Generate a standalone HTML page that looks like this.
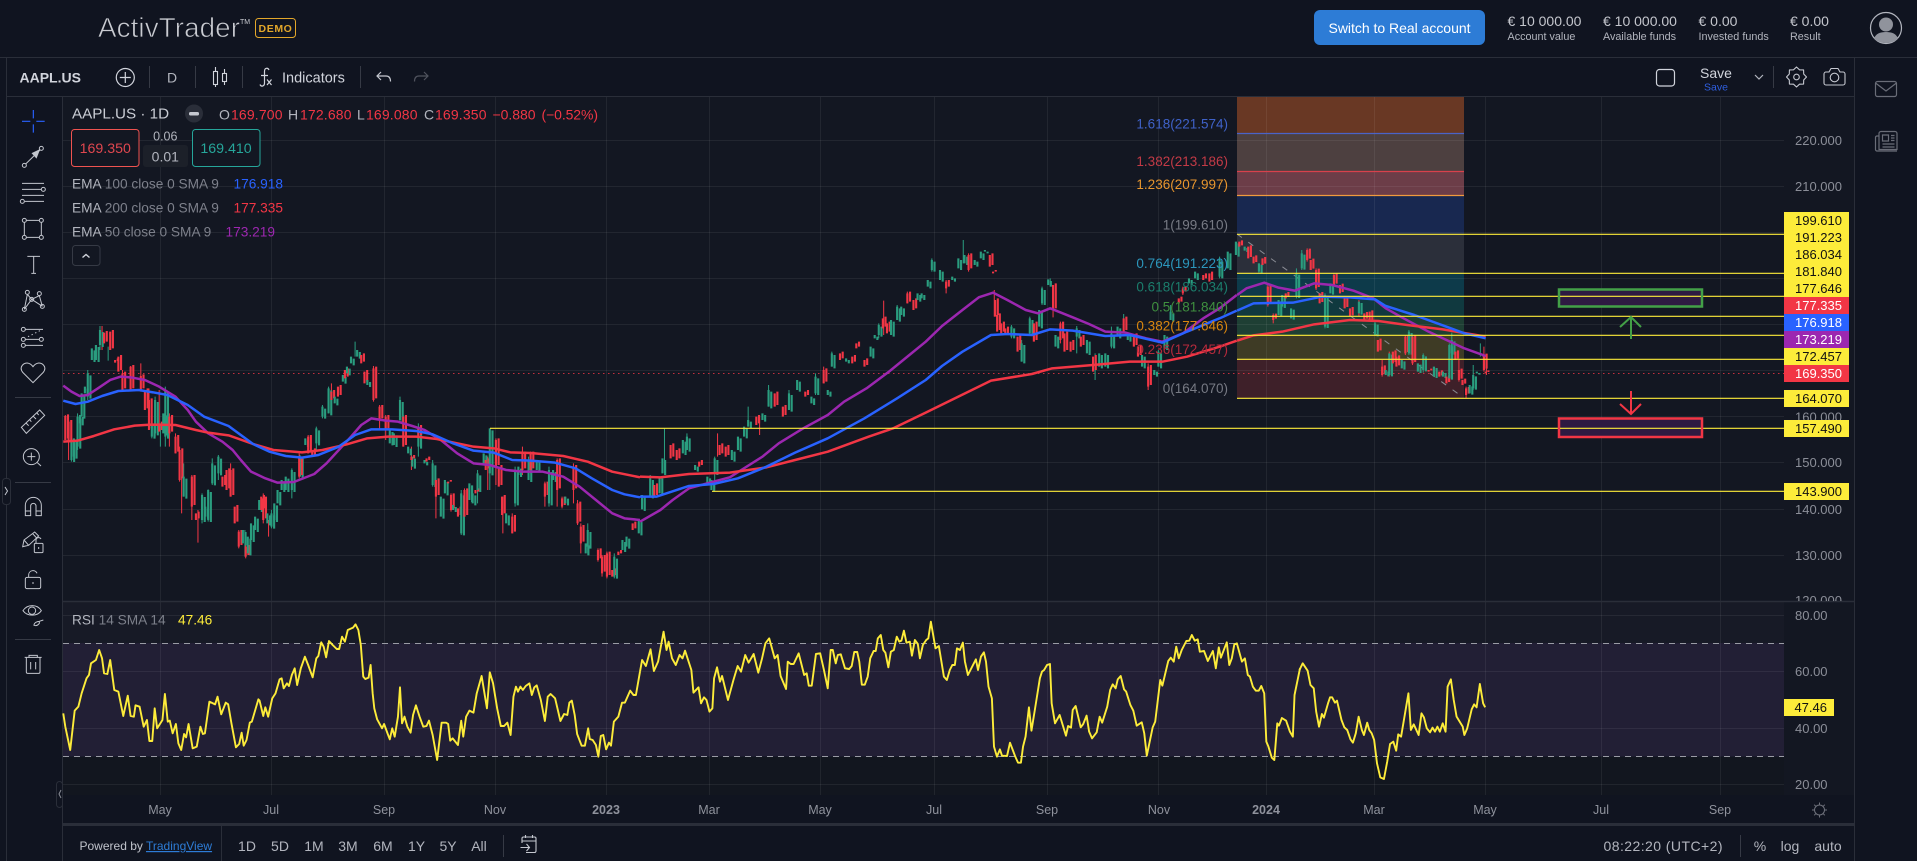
<!DOCTYPE html>
<html lang="en"><head><meta charset="utf-8"><title>ActivTrader AAPL.US</title>
<style>
html,body{margin:0;padding:0;background:#101420;overflow:hidden}
svg{display:block;font-family:"Liberation Sans",sans-serif}
.g{fill:#b2b5be}.d{fill:#7d808b}.r{fill:#f23645}
.ax{font-size:13px;fill:#8b8e98}
.t{font-size:12.5px;fill:#8f929c;text-anchor:middle}
.k{font-size:13px;fill:#111;text-anchor:end}
.w{font-size:13px;fill:#fff;text-anchor:end}
.i{fill:none;stroke:#c3c6ce;stroke-width:3}
.f{font-size:13.5px;text-anchor:end}
.rg{font-size:14px;fill:#b2b5be;text-anchor:middle}
.v{stroke:#fff;stroke-opacity:.065;stroke-width:1;fill:none}
.ema{fill:none;stroke-width:2.5;vector-effect:non-scaling-stroke;stroke-linejoin:round}
.rsi{fill:none;stroke:#fdec3a;stroke-width:1.9;vector-effect:non-scaling-stroke;stroke-linejoin:round}
</style></head><body>
<svg width="1917" height="861" viewBox="0 0 1917 861" xmlns="http://www.w3.org/2000/svg">
<rect width="1917" height="861" fill="#101420"/>
<!-- chart bg -->
<rect x="63" y="97" width="1791" height="727" fill="#131722"/>
<rect x="63" y="602" width="1791" height="41" fill="#171a26"/>
<rect x="63" y="757" width="1721" height="38" fill="#12161f"/>
<rect x="1784" y="602" width="70" height="193" fill="#131722"/>
<rect x="63" y="795" width="1791" height="29" fill="#101420"/>
<rect x="63" y="643" width="1721" height="113.500" fill="#221f35"/>
<!-- fib bands -->
<rect x="1237" y="97" width="227" height="36.500" fill="#693824"/>
<rect x="1237" y="133.500" width="227" height="38" fill="#4d4040"/>
<rect x="1237" y="171.500" width="227" height="24" fill="#6c3d48"/>
<rect x="1237" y="195.500" width="227" height="39" fill="#182850"/>
<rect x="1237" y="234.300" width="227" height="39" fill="#2b2f3a"/>
<rect x="1237" y="273.300" width="227" height="23" fill="#0d3a4a"/>
<rect x="1237" y="296.300" width="227" height="20" fill="#10393f"/>
<rect x="1237" y="316.300" width="227" height="19" fill="#1e3f34"/>
<rect x="1237" y="335.300" width="227" height="24" fill="#3e3b25"/>
<rect x="1237" y="359.300" width="227" height="39" fill="#3e2029"/>
<!-- grid -->
<path class="v" d="M63 140.500H1784M63 186.500H1784M63 232.500H1784M63 278.500H1784M63 324.500H1784M63 370.500H1784M63 416.500H1784M63 462.500H1784M63 509.500H1784M63 555.500H1784M63 615.500H1784M63 671.500H1784M63 728.500H1784M63 784.500H1784"/>
<path class="v" d="M160.500 97V795M271.500 97V795M384.500 97V795M495.500 97V795M606.500 97V795M709.500 97V795M820.500 97V795M934.500 97V795M1047.500 97V795M1158.500 97V795M1266.500 97V795M1374.500 97V795M1485.500 97V795M1601.500 97V795M1720.500 97V795"/>
<!-- structure lines -->
<path d="M0 57.500H1917M6.500 57.500V861M6.500 96.500H1854.500M62.500 96.500V861M1854.500 57.500V861" stroke="#2a2e39" fill="none"/>
<path d="M63 601.500H1854" stroke="#2a2e39" stroke-width="1.500"/>
<path d="M63 824.500H1854" stroke="#2a2e39" stroke-width="3"/>
<path d="M221.500 825V861" stroke="#2a2e39"/>
<path d="M149.500 66V88M195.500 66V88M242.500 66V88M360.500 66V88M1773.500 66V88" stroke="#363a45"/>
<path d="M503.500 835V857M1740.500 835V857" stroke="#363a45"/>
<!-- rsi dashed -->
<path d="M63 643.500H1784M63 756.500H1784" stroke="#9a9ca5" stroke-dasharray="6 5"/>
<!-- dotted price -->
<path d="M63 373.500H1784" stroke="#f23645" stroke-opacity=".8" stroke-dasharray="1.500 3.500"/>
<!-- trend dashed -->
<path d="M1237 234L1464 398" stroke="#8a8c94" stroke-dasharray="6 8"/>
<!-- candles zoom3 -->
<g transform="matrix(.40816 0 0 .33333 0 290)" fill="none">
<path stroke="#2a9d7f" stroke-width="2.500" d="M175 445V515M190 370V480M215 240V330M245 108V180M265 170V212M405 290V470M393 400V470M372 390V445M380 320V440M450 520V620M495 610V700M510 598V695M520 505V585M535 495V570M600 720V800M665 660V715M715 535V625M735 495V560M775 410V480M790 345V385M805 290V370M870 155V200M980 320V400M1025 400V500M1060 510V590M1130 600V735M1170 540V640M1200 415V600M1262 530V650M1295 500V570M1345 530V650M1440 700V790M1505 790V865"/>
<path stroke="#f23645" stroke-width="2.500" d="M160 375V450M168 390V510M250 108V180M300 240V305M320 228V300M345 220V305M365 295V420M390 300V420M415 370V470M430 430V490M440 470V575M445 560V670M470 555V690M485 660V758M565 520V620M585 720V775M602 760V805M645 610V700M658 690V740M733 490V565M755 435V490M812 280V330M915 228V335M930 345V420M945 375V450M988 375V470M1008 470V540M1068 565V685M1105 610V665M1138 595V680M1195 500V600M1215 445V585M1232 620V730M1255 670V730M1280 470V555M1300 485V550M1335 575V650M1365 505V650M1377 620V655M1405 520V640M1415 630V705M1423 700V790M1465 775V815M1475 795V860M1487 785V865"/>
<use href="#g3" transform="translate(6.600 6)"/><use href="#r3" transform="translate(6.600 -5)"/>
<path id="g3" stroke="#2a9d7f" stroke-width="5.200" d="M175 450V510M181 445V500M190 380V470M196 375V400M200 310V380M208 290V310M215 250V320M225 175V210M235 165V210M245 120V165M372 400V440M380 330V430M405 300V440M400 370V430M450 560V620M495 615V690M503 650V680M510 600V690M520 520V580M535 500V550M595 720V760M607 740V790M615 700V750M625 680V720M635 630V660M655 670V700M665 670V710M672 640V690M680 600V640M690 570V600M700 560V600M715 540V600M735 500V560M748 445V465M775 415V460M790 350V380M805 295V370M820 320V340M840 255V275M850 230V250M860 200V220M875 180V200M900 270V285M955 420V460M965 430V465M980 330V390M1000 470V490M1010 500V530M1025 410V470M1040 510V520M1060 520V585M1080 620V680M1090 570V610M1110 645V660M1130 610V730M1150 580V630M1158 610V640M1170 550V600M1185 490V520M1200 415V550M1240 670V700M1262 540V640M1270 530V555M1295 510V570M1315 510V540M1345 540V640M1355 540V570M1385 620V640M1440 720V770M1435 760V790M1505 800V860M1525 750V780M1535 740V770M1565 690V730"/>
<path id="r3" stroke="#f23645" stroke-width="5.200" d="M160 378V450M168 395V455M255 128V160M270 125V180M282 210V218M290 200V245M300 250V300M320 230V300M345 258V300M355 300V360M365 330V420M390 400V425M415 380V430M430 440V490M440 480V570M470 560V650M480 670V690M545 560V590M555 540V600M565 540V620M575 650V700M585 725V770M602 770V800M640 620V660M645 625V690M733 505V560M755 440V490M765 480V500M812 305V330M828 290V320M845 240V265M885 195V220M893 245V280M915 235V330M930 350V390M945 380V420M988 380V470M1008 500V510M1025 410V440M1045 505V515M1068 570V620M1098 575V580M1105 615V660M1122 655V680M1138 600V680M1165 600V610M1190 510V540M1215 450V530M1222 530V590M1230 620V675M1255 680V730M1280 490V540M1300 490V540M1335 580V620M1365 510V600M1377 625V650M1405 530V600M1415 640V700M1423 710V760M1465 780V810M1475 800V850M1487 790V860M1500 840V860M1515 785V795M1550 700V720"/>
</g>
<!-- candles zoom7 -->
<g transform="matrix(.40816 0 0 .33333 640 220)" fill="none">
<path stroke="#2a9d7f" stroke-width="2.500" d="M25 765V830M60 625V760M115 640V690M183 710V810M265 560V620M315 495V560M365 510V570M430 460V525M470 395V440M585 310V355M630 255V300M715 115V155M792 60V130M910 315V355M935 360V425M955 290V345M985 200V255M1005 175V200M1070 318V400M1115 400V480M1155 320V385M1185 282V335M1270 390V440M1300 255V300M1420 110V175"/>
<path stroke="#f23645" stroke-width="2.500" d="M190 640V710M293 590V645M450 440V490M597 242V345M655 215V250M750 180V220M805 100V155M868 210V290M1012 195V292M1030 305V370M1245 430V510M1330 200V225"/>
<use href="#g7" transform="translate(6.600 5)"/><use href="#r7" transform="translate(6.600 -5)"/>
<path id="g7" stroke="#2a9d7f" stroke-width="5.200" d="M5 825V868M25 775V830M48 770V820M55 715V760M105 660V700M115 650V690M135 735V750M165 770V790M175 780V810M183 715V760M225 690V720M240 650V690M255 620V650M265 600V620M300 580V600M315 510V560M365 520V570M385 480V510M420 530V550M430 470V520M460 510V525M470 400V440M505 415V425M565 380V410M575 345V355M585 315V345M615 300V345M630 260V300M640 260V285M680 220V240M690 220V235M705 180V200M715 120V150M735 150V180M765 170V180M780 115V145M795 105V130M820 120V135M835 95V115M845 90V95M910 320V350M935 370V425M955 295V340M978 270V320M985 205V250M1000 178V195M1018 345V380M1070 325V350M1095 360V400M1125 400V440M1140 400V440M1155 340V380M1170 320V350M1195 340V360M1230 405V440M1260 450V465M1270 395V440M1285 345V385M1300 275V300M1345 175V190M1360 155V175M1420 120V170M1440 95V145M1460 65V105"/>
<path id="r7" stroke="#f23645" stroke-width="5.200" d="M35 795V830M75 675V715M90 690V720M145 725V740M195 675V705M210 680V710M285 590V615M330 520V560M350 560V590M405 515V530M450 450V490M490 400V420M520 410V430M530 370V385M550 420V440M595 295V325M605 310V340M655 220V250M670 240V270M750 185V205M805 105V150M857 105V140M865 155V160M870 240V290M875 285V335M885 310V340M895 325V345M925 350V395M965 310V365M1012 195V270M1030 310V360M1040 340V395M1055 365V395M1080 350V380M1110 410V455M1185 295V335M1210 345V380M1220 380V410M1245 440V500M1320 235V250M1330 205V220M1380 165V180M1395 160V185"/>
</g>
<!-- candles zoom5 -->
<g transform="matrix(.35714 0 0 .33333 1100 220)" fill="none">
<path stroke="#2a9d7f" stroke-width="2.800" d="M445 130V160M550 145V235M565 90V150M630 220V325M770 305V348M865 330V405M905 400V458M978 370V480M985 338V400M1065 370V410M1045 435V510"/>
<path stroke="#f23645" stroke-width="2.800" d="M470 195V260M485 280V310M580 85V125M605 145V210M655 160V195M725 240V290M790 420V470M810 395V470M855 345V405M875 345V435M1005 420V485M1025 500V535M1075 380V455M1082 440V465"/>
<use href="#g5" transform="translate(7.500 4)"/><use href="#r5" transform="translate(7.500 -4)"/>
<path id="g5" stroke="#2a9d7f" stroke-width="6" d="M405 80V92M445 130V155M500 240V285M510 225V260M535 265V295M550 160V230M565 100V145M630 225V320M645 190V220M725 245V280M770 310V345M800 450V465M810 400V465M845 420V445M865 335V400M890 430V455M905 405V450M935 440V470M960 455V470M978 375V475M985 360V400M1035 495V520M1045 465V505M1055 455V460M1065 400V405"/>
<path id="r5" stroke="#f23645" stroke-width="6" d="M390 65V80M415 80V115M430 110V130M455 115V135M470 200V255M485 285V300M520 220V235M580 90V120M590 120V150M605 150V205M615 220V250M655 165V195M672 195V220M685 235V265M700 265V290M740 280V300M755 275V305M778 360V395M790 440V465M820 395V430M830 410V440M855 350V400M875 350V430M920 450V455M950 455V470M970 470V490M995 395V420M1005 450V480M1015 480V495M1025 505V525M1075 405V450M1080 455V460"/>
</g>
<!-- ema zoom3 -->
<g transform="matrix(.40816 0 0 .33333 0 290)">
<polyline class="ema" stroke="#9c27b0" points="155,287 175,305 195,318 215,315 240,295 270,270 295,260 320,262 355,270 390,290 430,320 460,360 480,395 510,430 545,455 570,480 590,510 615,545 650,565 680,578 720,576 770,552 800,520 830,480 860,440 885,405 910,385 945,392 975,395 1010,408 1040,420 1080,450 1120,490 1160,520 1200,525 1240,540 1280,545 1330,545 1380,560 1420,590 1460,630 1500,670 1530,685 1568,690"/>
<polyline class="ema" stroke="#f23645" points="155,455 190,452 230,438 280,418 330,407 370,404 430,405 480,420 510,428 560,436 620,462 670,480 740,487 790,480 850,463 900,445 950,440 1020,440 1070,447 1120,460 1160,470 1210,475 1250,487 1300,489 1380,498 1440,515 1500,545 1568,562"/>
<polyline class="ema" stroke="#2962ff" points="155,332 185,342 215,335 250,318 290,303 340,300 375,307 410,315 460,345 500,380 560,408 590,435 620,462 660,485 700,498 740,503 780,495 830,470 870,435 910,418 960,418 1020,423 1060,433 1110,460 1160,482 1210,488 1255,510 1300,512 1360,518 1410,535 1450,565 1500,600 1530,613 1568,622"/>
</g>
<!-- ema zoom7 -->
<g transform="matrix(.40816 0 0 .33333 640 220)">
<polyline class="ema" stroke="#9c27b0" points="0,905 50,870 80,840 120,805 165,790 220,772 300,710 340,670 400,625 460,585 500,545 555,505 610,455 660,405 700,365 740,318 790,270 830,232 865,218 900,240 945,270 975,280 1005,265 1060,292 1100,312 1140,335 1190,338 1240,355 1280,365 1330,340 1380,295 1420,265 1462,225"/>
<polyline class="ema" stroke="#f23645" points="0,770 50,772 120,762 220,758 310,742 380,720 460,695 560,650 620,625 700,578 780,530 860,482 960,462 1010,445 1110,435 1200,425 1280,425 1340,410 1420,380 1462,362"/>
<polyline class="ema" stroke="#2962ff" points="0,830 40,830 120,798 180,792 240,775 310,740 380,698 460,655 550,595 630,535 700,480 740,438 790,395 860,345 900,342 960,345 1005,328 1060,332 1140,348 1200,345 1280,368 1340,335 1420,295 1462,272"/>
</g>
<!-- ema zoom5 -->
<g transform="matrix(.35714 0 0 .33333 1100 220)">
<polyline class="ema" stroke="#9c27b0" points="384,225 410,205 460,188 500,203 545,212 600,190 650,195 710,212 765,235 800,265 850,295 920,335 980,365 1020,385 1080,408"/>
<polyline class="ema" stroke="#f23645" points="384,362 430,346 510,335 600,313 700,300 780,303 860,315 960,328 1080,350"/>
<polyline class="ema" stroke="#2962ff" points="384,272 430,250 540,248 620,230 700,232 770,238 800,258 880,285 970,320 1020,340 1080,355"/>
</g>
<!-- fib lines -->
<path d="M1237 133.500H1464" stroke="#4a63c8" stroke-width="1.300"/>
<path d="M1237 171.500H1464" stroke="#d8414c" stroke-width="1.300"/>
<path d="M1237 195.500H1464" stroke="#f09a3e" stroke-width="1.300"/>
<path d="M1237 234.300H1784M1237 273.300H1784M1240 296.300H1784M1237 316.300H1784M1237 335.300H1784M1237 359.300H1784M1237 398.300H1784M490 428.300H1784M712 491.300H1784" stroke="#fdec3a" stroke-width="1.200"/>
<!-- fib labels -->
<g class="f">
<text class="f" x="1228" y="128.500" fill="#3f62c9">1.618(221.574)</text>
<text class="f" x="1228" y="166" fill="#c33a46">1.382(213.186)</text>
<text class="f" x="1228" y="189" fill="#e8962e">1.236(207.997)</text>
<text class="f" x="1228" y="229.500" fill="#777a84">1(199.610)</text>
<text class="f" x="1228" y="268" fill="#2c97bd">0.764(191.223)</text>
<text class="f" x="1228" y="291.500" fill="#1b7d6c">0.618(186.034)</text>
<text class="f" x="1228" y="311.500" fill="#3f8f3f">0.5(181.840)</text>
<text class="f" x="1228" y="330.500" fill="#d8860f">0.382(177.646)</text>
<text class="f" x="1228" y="354" fill="#b42a3c">0.236(172.457)</text>
<text class="f" x="1228" y="393" fill="#777a84">0(164.070)</text>
</g>
<!-- boxes & arrows -->
<rect x="1559" y="289.500" width="143" height="17" fill="#2e1a42" stroke="#43a047" stroke-width="2.500"/>
<path d="M1560 296.300H1701" stroke="#fdec3a" stroke-width="1.200"/>
<rect x="1559" y="418.500" width="143" height="18.500" fill="#2e1a42" stroke="#f23645" stroke-width="2.500"/>
<path d="M1560 428.300H1701" stroke="#fdec3a" stroke-width="1.200"/>
<path d="M1631 339V317M1620 327L1631 317L1641 327" fill="none" stroke="#43a047" stroke-width="2"/>
<path d="M1631 391V414M1620 404L1631 414L1641 404" fill="none" stroke="#f23645" stroke-width="2"/>
<!-- RSI -->
<g transform="matrix(.40816 0 0 .33333 0 580)">
<polyline class="rsi" points="155,400 160,440 172,510 183,392 192,380 200,340 212,295 218,285 223,250 235,240 243,210 250,235 255,280 263,282 270,240 280,330 290,335 302,408 313,347 320,408 328,410 332,376 342,380 352,440 360,420 366,483 373,483 379,385 385,445 398,420 404,342 411,425 416,422 423,460 431,432 437,490 444,510 451,462 456,472 462,432 472,505 482,500 491,440 497,462 502,460 513,365 527,373 533,350 542,403 553,368 559,373 567,430 578,502 586,492 592,458 597,497 604,480 612,428 617,425 633,358 636,362 645,408 650,382 657,410 667,355 675,340 685,298 690,295 695,325 703,310 708,318 715,285 722,265 728,315 737,265 747,230 755,255 766,292 775,235 780,228 787,187 793,200 799,232 806,183 815,195 825,207 831,207 838,170 845,185 852,150 865,143 871,133 878,150 884,195 890,290 895,297 903,293 908,255 913,340 917,385 924,418 936,445 941,432 950,462 955,478 961,445 967,470 975,410 980,322 985,430 991,410 998,440 1006,458 1012,405 1019,376 1028,410 1037,440 1045,438 1051,422 1060,465 1071,540 1082,428 1093,428 1098,432 1103,482 1109,475 1122,495 1130,422 1135,470 1142,410 1150,392 1160,398 1168,340 1180,288 1193,385 1200,277 1208,310 1218,385 1227,438 1235,438 1243,428 1251,465 1258,350 1264,320 1269,335 1275,320 1281,330 1288,318 1297,310 1303,345 1309,322 1315,316 1325,360 1335,423 1342,350 1349,342 1360,355 1373,423 1382,402 1390,405 1395,368 1401,362 1408,405 1414,462 1425,497 1433,497 1441,445 1445,477 1452,480 1460,495 1466,530 1472,468 1478,465 1485,508 1492,488 1497,497 1504,425 1515,410 1524,368 1531,368 1544,332 1552,345 1558,345 1568,275"/>
</g>
<g transform="matrix(.42092 0 0 .33333 640 590)">
<polyline class="rsi" points="0,245 5,210 14,228 25,178 33,243 43,215 56,125 63,180 68,155 76,205 85,225 94,195 101,205 107,182 122,240 127,308 139,292 145,340 152,322 158,330 165,365 172,355 176,265 183,232 190,275 195,258 209,330 222,270 232,228 240,245 250,195 258,218 270,192 281,248 290,205 298,160 307,145 320,205 327,195 334,258 347,297 351,215 358,222 365,222 377,190 390,255 396,250 401,287 408,287 418,192 428,190 437,240 446,295 453,180 458,180 465,220 470,195 477,193 487,235 497,237 503,228 509,186 516,186 521,215 527,284 534,284 541,260 547,205 555,183 560,183 565,145 572,135 578,180 583,188 590,232 596,185 603,180 610,140 616,155 621,152 627,122 633,158 641,155 646,197 653,150 660,162 665,205 672,165 680,150 685,145 691,95 702,175 710,168 722,260 729,270 736,240 742,225 748,225 753,175 760,180 767,158 772,215 779,255 798,208 803,240 810,200 817,187 822,215 828,290 836,325 841,470 848,500 855,478 860,497 872,498 879,458 891,498 898,518 905,518 910,470 916,440 924,352 930,422 938,360 950,265 955,245 960,240 967,225 974,222 978,340 986,400 997,375 1012,437 1017,408 1024,413 1028,360 1035,348 1047,412 1053,402 1061,377 1067,425 1074,445 1085,427 1092,380 1098,398 1110,350 1117,300 1123,283 1130,295 1135,268 1142,258 1150,298 1155,305 1165,345 1172,362 1180,407 1192,397 1198,430 1204,497 1218,412 1224,395 1236,270 1241,287 1255,213 1261,203 1268,215 1274,170 1280,205 1287,180 1298,153 1305,152 1311,135 1318,152 1325,148 1330,185 1340,183 1349,213 1361,183 1368,235 1375,172 1380,203 1394,157 1400,225 1406,205 1412,163 1418,160 1430,215 1437,205 1444,255 1449,260 1456,290 1463,302 1470,302 1476,288 1483,310 1488,455 1493,470 1501,503 1507,510 1514,400 1518,407 1525,384 1535,392 1544,425 1551,440 1555,315 1568,235"/>
</g>
<g transform="matrix(.40816 0 0 .33333 1277 580)">
<polyline class="rsi" points="55,270 63,250 75,272 82,315 90,325 96,395 103,440 110,402 115,413 125,370 130,352 135,352 142,368 147,362 158,420 165,442 172,450 180,478 186,488 193,460 200,410 208,450 213,465 221,428 226,450 232,460 238,480 245,550 253,592 262,597 270,545 277,492 285,485 292,512 297,463 304,470 322,340 328,450 335,433 347,465 354,400 360,412 367,445 375,457 381,443 387,455 393,440 399,455 406,430 413,455 418,320 426,298 433,360 440,410 455,440 459,465 466,445 477,388 483,373 489,382 497,312 505,370 510,382"/>
</g>
<!-- price axis -->
<g class="ax">
<text x="1795" y="145">220.000</text><text x="1795" y="191">210.000</text>
<text x="1795" y="421.500">160.000</text><text x="1795" y="467">150.000</text><text x="1795" y="514">140.000</text><text x="1795" y="560">130.000</text>
<text x="1795" y="620">80.00</text><text x="1795" y="676">60.00</text><text x="1795" y="733">40.00</text><text x="1795" y="789">20.00</text>
</g>
<svg x="1784" y="590" width="65" height="11"><text class="ax" x="11" y="15">120.000</text></svg>
<rect x="1784" y="212" width="65" height="85" fill="#fdec3a"/>
<rect x="1784" y="297" width="65" height="17" fill="#f23645"/>
<rect x="1784" y="314" width="65" height="17" fill="#2962ff"/>
<rect x="1784" y="331" width="65" height="17" fill="#9c27b0"/>
<rect x="1784" y="348" width="65" height="17" fill="#fdec3a"/>
<rect x="1784" y="365" width="65" height="17" fill="#f23645"/>
<rect x="1784" y="390" width="65" height="17" fill="#fdec3a"/>
<rect x="1784" y="420" width="65" height="17" fill="#fdec3a"/>
<rect x="1784" y="483" width="65" height="17" fill="#fdec3a"/>
<rect x="1784" y="699" width="50" height="17" fill="#fdec3a"/>
<text class="k" x="1842" y="225">199.610</text><text class="k" x="1842" y="242">191.223</text><text class="k" x="1842" y="259">186.034</text><text class="k" x="1842" y="276">181.840</text><text class="k" x="1842" y="293">177.646</text>
<text class="w" x="1842" y="310">177.335</text><text class="w" x="1842" y="327">176.918</text><text class="w" x="1842" y="344">173.219</text>
<text class="k" x="1842" y="361">172.457</text><text class="w" x="1842" y="378">169.350</text>
<text class="k" x="1842" y="403">164.070</text><text class="k" x="1842" y="433">157.490</text><text class="k" x="1842" y="496">143.900</text>
<text class="k" x="1827" y="712">47.46</text>
<!-- time axis -->
<g class="t">
<text class="t" x="160" y="814">May</text><text class="t" x="271" y="814">Jul</text><text class="t" x="384" y="814">Sep</text><text class="t" x="495" y="814">Nov</text>
<text class="t" x="606" y="814" font-weight="700">2023</text><text class="t" x="709" y="814">Mar</text><text class="t" x="820" y="814">May</text><text class="t" x="934" y="814">Jul</text><text class="t" x="1047" y="814">Sep</text><text class="t" x="1159" y="814">Nov</text>
<text class="t" x="1266" y="814" font-weight="700">2024</text><text class="t" x="1374" y="814">Mar</text><text class="t" x="1485" y="814">May</text><text class="t" x="1601" y="814">Jul</text><text class="t" x="1720" y="814">Sep</text>
</g>
<g fill="none" stroke="#6f727c"><circle cx="1819.500" cy="810" r="5"/><path d="M1819.500 802.500v2M1819.500 815.500v2M1812 810h2M1825 810h2M1814.200 804.700l1.400 1.400M1823.400 813.900l1.400 1.400M1824.800 804.700l-1.400 1.400M1815.600 813.900l-1.400 1.400"/></g>
<!-- header -->
<text x="98" y="37" font-size="27.800" fill="#c9cbd1" stroke="#101420" stroke-width=".7" textLength="142" lengthAdjust="spacing">ActivTrader</text>
<text x="240" y="24" font-size="7" fill="#c9cbd1">TM</text>
<rect x="255.500" y="18.500" width="40" height="19" rx="3" fill="none" stroke="#e3a72a"/>
<text x="275.500" y="32" font-size="10.500" font-weight="700" fill="#e3a72a" text-anchor="middle" letter-spacing=".6">DEMO</text>
<rect x="1314" y="10" width="171" height="35" rx="6" fill="#2d7cd6"/>
<text x="1399.500" y="33" font-size="14" fill="#fff" text-anchor="middle" textLength="142" lengthAdjust="spacing">Switch to Real account</text>
<g font-size="14" fill="#c4c6cd">
<text x="1507.500" y="26">€ 10 000.00</text><text x="1603" y="26">€ 10 000.00</text><text x="1698.500" y="26">€ 0.00</text><text x="1790" y="26">€ 0.00</text>
</g>
<g font-size="10.800" fill="#b2b5be">
<text x="1507.500" y="40">Account value</text><text x="1603" y="40">Available funds</text><text x="1698.500" y="40">Invested funds</text><text x="1790" y="40">Result</text>
</g>
<circle cx="1886" cy="28" r="15.500" fill="none" stroke="#b2b5be" stroke-width="1.200"/>
<circle cx="1886" cy="24.500" r="7" fill="#90939c"/>
<path d="M1874 38.500c2-5 6-6.500 12-6.500s10 1.500 12 6.500c-3 3-7 4.500-12 4.500s-9-1.500-12-4.500z" fill="#90939c"/>
<!-- toolbar -->
<text x="19.500" y="82.500" font-size="14" font-weight="700" fill="#d1d4dc">AAPL.US</text>
<circle cx="125.300" cy="77.500" r="9" fill="none" stroke="#d1d4dc" stroke-width="1.200"/>
<path d="M125.300 72v11M119.800 77.500h11" stroke="#d1d4dc" stroke-width="1.200"/>
<text x="172" y="82.500" font-size="14" fill="#b2b5be" text-anchor="middle">D</text>
<g fill="none" stroke="#d1d4dc" stroke-width="1.100"><rect x="213.500" y="71.500" width="4" height="13"/><path d="M215.500 67v4.500M215.500 84.500V87"/><rect x="222.500" y="73.500" width="4" height="8"/><path d="M224.500 69v4.500M224.500 81.500V85"/></g>
<g fill="none" stroke="#d1d4dc" stroke-width="1.200"><path d="M269 70c-1-2.500-4.500-2.500-4.500 1.500V83c0 3.500-3.500 4-4.500 1.500M261 75.500h7M267 79.500l4.500 5.500M271.500 79.500l-4.500 5.500"/></g>
<text x="282" y="82.500" font-size="14.500" fill="#d1d4dc">Indicators</text>
<g fill="none" stroke="#c5c8d0" stroke-width="1.200"><path d="M381 72l-4 4 4 4M377 76h9c3 0 4.500 2 4.500 5.500"/></g>
<g fill="none" stroke="#50535e" stroke-width="1.200"><path d="M424 72l4 4-4 4M428 76h-9c-3 0-4.500 2-4.500 5.500"/></g>
<rect x="1656.500" y="69.500" width="18" height="16.500" rx="3" fill="none" stroke="#d1d4dc" stroke-width="1.200"/>
<text x="1716" y="78" font-size="14" fill="#d1d4dc" text-anchor="middle">Save</text>
<text x="1716" y="90.500" font-size="10.500" fill="#2f5fe0" text-anchor="middle">Save</text>
<path d="M1755 75l4 4 4-4" fill="none" stroke="#b2b5be" stroke-width="1.200"/>
<g fill="none" stroke="#c5c8d0" stroke-width="1.100" stroke-linejoin="round">
<circle cx="1796.500" cy="77" r="2.800"/>
<path transform="translate(1796.500 77)" d="M10 0L7.200 3L7.070 7.070L3 7.200L0 10L-3 7.200L-7.070 7.070L-7.200 3L-10 0L-7.200 -3L-7.070 -7.070L-3 -7.200L0 -10L3 -7.200L7.070 -7.070L7.200 -3Z"/>
<path d="M1826 72h3l2-3.500h7l2 3.500h3a2 2 0 0 1 2 2v9a2 2 0 0 1-2 2h-17a2 2 0 0 1-2-2v-9a2 2 0 0 1 2-2z"/><circle cx="1834.500" cy="77.500" r="4.300"/>
</g>
<g fill="none" stroke="#6a6d78" stroke-width="1.200">
<rect x="1875.500" y="81.500" width="21" height="15" rx="2"/><path d="M1875.500 83l10.500 8 10.500-8"/>
<path d="M1879 133.500a2 2 0 0 1 2-2h14a2 2 0 0 1 2 2v16h-18zM1879 136h-2a1.500 1.500 0 0 0-1.500 1.500v12a1.500 1.500 0 0 0 1.500 1.500h20M1882.500 135h6v6h-6zM1891 135.500h3.500M1891 138h3.500M1891 140.500h3.500M1882.500 144h12M1882.500 147h12"/>
</g>
<!-- legend -->
<text x="72" y="118.500" font-size="15.200" fill="#c9ccd4">AAPL.US · 1D</text>
<circle cx="194" cy="113.500" r="9" fill="#2a2e39"/><rect x="189" y="112" width="10" height="3.500" rx="1.500" fill="#c5c8d0"/>
<g font-size="14">
<text x="219" y="119.500" class="g">O</text><text x="231" y="119.500" class="r" textLength="51.500">169.700</text>
<text x="288" y="119.500" class="g">H</text><text x="300" y="119.500" class="r" textLength="51.500">172.680</text>
<text x="357" y="119.500" class="g">L</text><text x="366" y="119.500" class="r" textLength="51.500">169.080</text>
<text x="424" y="119.500" class="g">C</text><text x="435" y="119.500" class="r" textLength="51.500">169.350</text>
<text x="492.500" y="119.500" class="r" textLength="43">−0.880</text><text x="541.500" y="119.500" class="r" textLength="56.500">(−0.52%)</text>
</g>
<rect x="71.500" y="129.500" width="67.500" height="37" rx="3" fill="#131722" stroke="#ef5350"/>
<text x="105.300" y="153" font-size="14.200" fill="#e0474f" text-anchor="middle">169.350</text>
<rect x="192.500" y="129.500" width="67.500" height="37" rx="3" fill="#131722" stroke="#26a69a"/>
<text x="226" y="153" font-size="14.200" fill="#26a69a" text-anchor="middle">169.410</text>
<text x="165.300" y="140.500" font-size="12.500" fill="#b2b5be" text-anchor="middle">0.06</text>
<rect x="143" y="145" width="45" height="22" rx="3" fill="#1c2029"/>
<text x="165.300" y="161.500" font-size="14" fill="#b2b5be" text-anchor="middle">0.01</text>
<g font-size="13.700">
<text x="72" y="188.500" class="g">EMA <tspan class="d">100 close 0 SMA 9</tspan></text><text x="233.500" y="188.500" fill="#2962ff">176.918</text>
<text x="72" y="212.500" class="g">EMA <tspan class="d">200 close 0 SMA 9</tspan></text><text x="233.500" y="212.500" fill="#f23645">177.335</text>
<text x="72" y="236.500" class="g">EMA <tspan class="d">50 close 0 SMA 9</tspan></text><text x="225.500" y="236.500" fill="#9c27b0">173.219</text>
</g>
<rect x="72.500" y="245.500" width="27.500" height="20" rx="3" fill="#131722" stroke="#363a45"/>
<path d="M82.500 257.500l3.500-3 3.500 3" fill="none" stroke="#d1d4dc" stroke-width="1.400"/>
<g font-size="13.700">
<text x="72" y="624.500" class="g">RSI <tspan class="d">14 SMA 14</tspan></text><text x="178" y="624.500" fill="#fdec3a">47.46</text>
</g>
<!-- left toolbar 1 -->
<g transform="translate(8 100) scale(.33333)" class="i">
<path d="M76 30V55M76 73V98M42 64H67M85 64H110" stroke="#2962ff" stroke-width="3.500"/>
<circle cx="49" cy="196" r="6"/><circle cx="100" cy="145" r="6"/><path d="M53 192L96 150"/><path d="M73 160L94 150L85 173Z" fill="#c3c6ce"/>
<path d="M42 250H108M42 268H100M42 286H108M50 304H108"/><circle cx="106" cy="268" r="6"/><circle cx="43" cy="304" r="6"/>
<path d="M55 361H94M49 367V406M100 367V406M55 412H94"/><circle cx="49" cy="361" r="6"/><circle cx="100" cy="361" r="6"/><circle cx="49" cy="412" r="6"/><circle cx="100" cy="412" r="6"/>
<path d="M58 469H96M77 469V520M70 520H84"/>
<path d="M58 583L71 598L94 587M94 587L103 619M58 583L49 628M71 598L103 619M71 598L49 628"/><circle cx="58" cy="577" r="6"/><circle cx="94" cy="581" r="6"/><circle cx="71" cy="598" r="6"/><circle cx="49" cy="628" r="6"/><circle cx="103" cy="619" r="6"/>
<path d="M52 688H105M52 718H94M52 736H105"/><circle cx="46" cy="688" r="6"/><circle cx="46" cy="718" r="6"/><circle cx="100" cy="718" r="6"/><circle cx="46" cy="736" r="6"/><path d="M60 710L100 690" stroke-dasharray="4 8"/>
<path d="M75 848L45 818C30 800 50 785 62 790C68 792 72 796 75 800C78 796 82 792 88 790C100 785 120 800 105 818Z"/>
</g>
<path d="M15 397.500H51M15 482.500H51M15 639.500H51" stroke="#363a45"/>
<!-- left toolbar 2 -->
<g transform="translate(8 400) scale(.33333)" class="i">
<path d="M40 82L95 30L110 46L55 100ZM54 69L62 77M65 59L70 65M76 49L84 57M87 39L92 45"/>
<circle cx="70" cy="170" r="24"/><path d="M70 158V182M58 170H82M88 188L99 198"/>
<path d="M52 347V316A24 24 0 0 1 100 316V347H84V318A8 8 0 0 0 68 318V347ZM52 333H68M84 333H100"/>
<path d="M44 440L48 420L80 396L92 408L62 436ZM48 420L62 436M74 401L86 414"/>
<rect x="79" y="430" width="26" height="28" rx="3"/><path d="M84 430V420A8 8 0 0 1 99 417"/><path d="M92 441V447"/>
<rect x="52" y="532" width="46" height="34" rx="5"/><path d="M62 532V524A13 13 0 0 1 87 520M75 546V552"/>
<path d="M45 632C58 612 88 612 100 632C88 650 58 650 45 632Z"/><circle cx="72" cy="632" r="11"/><path d="M78 676C78 668 88 664 94 664L94 670C90 676 84 678 78 676ZM94 664L106 660"/>
<path d="M50 772H101M63 772V766H88V772M55 772H96V816A4 4 0 0 1 92 820H59A4 4 0 0 1 55 816ZM68 786V808M83 786V808"/>
</g>
<rect x="2.500" y="478.500" width="8" height="26" rx="3" fill="#101420" stroke="#2a2e39"/>
<path d="M5 487l2.500 4-2.500 4" fill="none" stroke="#c5c8d0"/>
<rect x="56.500" y="781.500" width="6" height="26" rx="3" fill="#101420" stroke="#2a2e39"/>
<path d="M61 790l-2 4 2 4" fill="none" stroke="#8a8d96"/>
<!-- bottom -->
<text x="79.500" y="850" font-size="12" fill="#c0c3cb">Powered by <tspan fill="#2d7cd6" text-decoration="underline">TradingView</tspan></text>
<text class="rg" x="247" y="851">1D</text><text class="rg" x="280" y="851">5D</text><text class="rg" x="314" y="851">1M</text><text class="rg" x="348" y="851">3M</text><text class="rg" x="383" y="851">6M</text><text class="rg" x="416.500" y="851">1Y</text><text class="rg" x="448" y="851">5Y</text><text class="rg" x="479" y="851">All</text>
<g fill="none" stroke="#c5c8d0" stroke-width="1.100"><path d="M522 843v-4.500a1.500 1.500 0 0 1 1.500-1.500h11a1.500 1.500 0 0 1 1.500 1.500V851a1.500 1.500 0 0 1-1.500 1.500H526M522 841h14M525.500 835v3M532.500 835v3M520.500 847.500h9M526.500 844l3 3.500-3 3.500"/></g>
<text x="1603.500" y="851" font-size="14" fill="#b2b5be" textLength="119">08:22:20 (UTC+2)</text>
<text class="rg" x="1760" y="851">%</text><text class="rg" x="1790" y="851">log</text><text class="rg" x="1828" y="851">auto</text>
</svg>
</body></html>
